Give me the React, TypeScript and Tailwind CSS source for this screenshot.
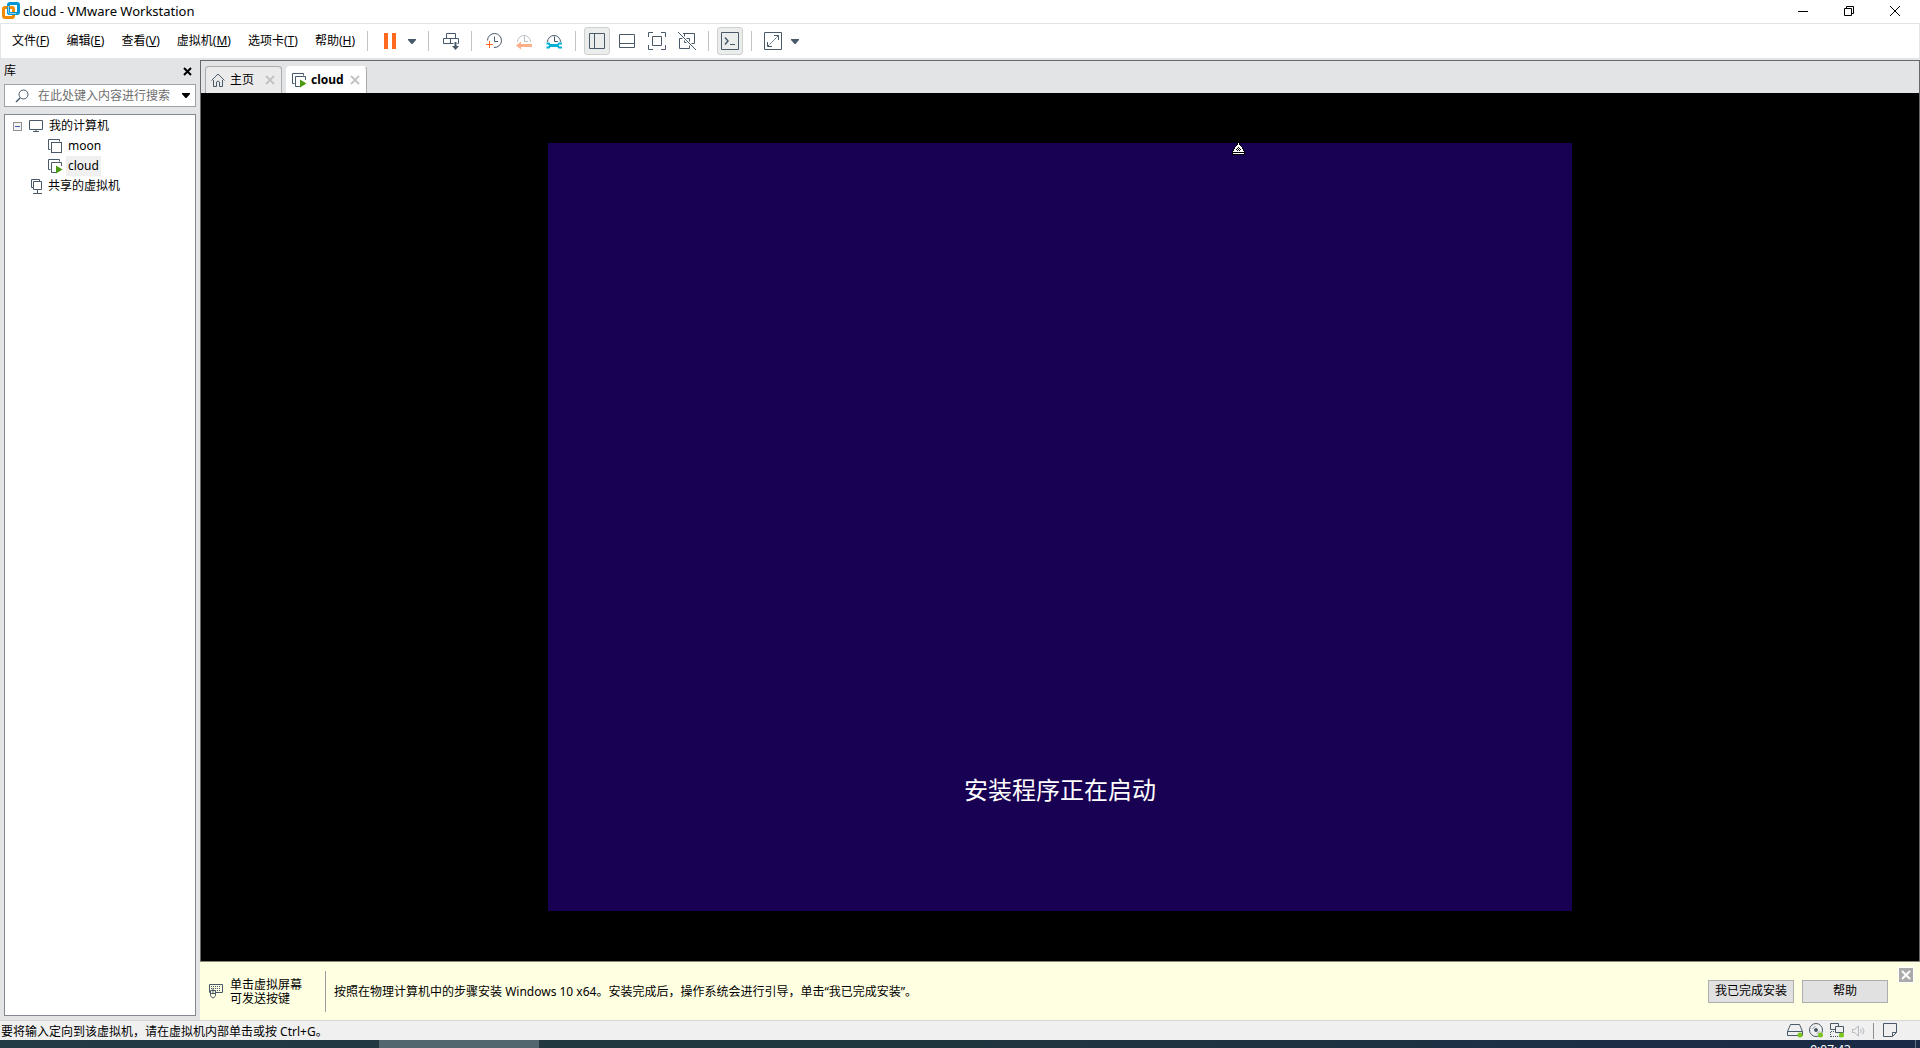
import type { ReactNode } from 'react'

const menus = [
  { label: '文件', key: 'F' },
  { label: '编辑', key: 'E' },
  { label: '查看', key: 'V' },
  { label: '虚拟机', key: 'M' },
  { label: '选项卡', key: 'T' },
  { label: '帮助', key: 'H' },
]

function Icon({ w = 18, h = 18, className = '', children }: { w?: number; h?: number; className?: string; children: ReactNode }) {
  return (
    <svg
      width={w}
      height={h}
      viewBox={`0 0 ${w} ${h}`}
      fill="none"
      stroke="#485969"
      className={`shrink-0 ${className}`}
      aria-hidden="true"
    >
      {children}
    </svg>
  )
}

function Logo() {
  return (
    <Icon w={18} h={18}>
      <rect x="6.5" y="1.5" width="10" height="10" rx="1.5" stroke="#0095d3" strokeWidth="3" />
      <rect x="1.5" y="5.5" width="10" height="10" rx="1.5" stroke="#f38b00" strokeWidth="3" />
      <path d="M6.5 5v5a1.5 1.5 0 0 0 1.5 1.5h6" stroke="#0095d3" strokeWidth="3" />
      <path d="M6.5 4v6q0 1.5 1.5 1.5h6" stroke="#8fd0ee" />
    </Icon>
  )
}

function Caret({ color = '#485969' }: { color?: string }) {
  return (
    <Icon w={8} h={5}>
      <path d="M0 0h8v1L4.5 5h-1L0 1z" fill={color} stroke="none" />
    </Icon>
  )
}

function Cross({ size = 10, color = '#000', width = 1 }: { size?: number; color?: string; width?: number }) {
  return (
    <Icon w={size} h={size}>
      <path d={`M1 1L${size - 1} ${size - 1}M${size - 1} 1L1 ${size - 1}`} stroke={color} strokeWidth={width} />
    </Icon>
  )
}

function VmIcon({ running = false }: { running?: boolean }) {
  return (
    <Icon w={15} h={15}>
      <path d="M2.5 10.5h-2v-10h11v2" />
      {running ? (
        <>
          <path d="M8 13.5H3.5v-10h10V7" />
          <path d="M8 6.5v8l6.5-4z" fill="#4c9a14" stroke="none" />
        </>
      ) : (
        <rect x="3.5" y="3.5" width="10" height="10" />
      )}
    </Icon>
  )
}

// upper half of a clock face, the lower half is covered by each tool's badge
function Clock({ color = '#485969' }: { color?: string }) {
  return (
    <g stroke={color}>
      <path d="M2.5 10a6.5 6.5 0 1 1 13 0" />
      <path d="M9.5 4.5v5H13" />
    </g>
  )
}

function Sep() {
  return <span className="h-5 w-px shrink-0 bg-[#c3c3c3]" />
}

function Tool({ label, active = false, className = '', children }: { label: string; active?: boolean; className?: string; children: ReactNode }) {
  return (
    <button
      type="button"
      aria-label={label}
      className={`flex h-7 shrink-0 items-center justify-center border ${
        active ? 'rounded-[3px] border-[#cfd1d1] bg-[#ebecec]' : 'border-transparent'
      } ${className}`}
    >
      {children}
    </button>
  )
}

function TitleBar() {
  return (
    <header className="flex h-[23px] shrink-0 items-center bg-white pb-0.5 pl-0.5 pr-0.5">
      <Logo />
      <h1 className="ml-[3px] flex-1 text-[13px] leading-5">cloud - VMware Workstation</h1>
      <button type="button" aria-label="最小化" className="flex h-5 w-[46px] items-center justify-center">
        <Icon w={10} h={10}><path d="M0 5.5h10" stroke="#000" /></Icon>
      </button>
      <button type="button" aria-label="还原" className="flex h-5 w-[46px] items-center justify-center">
        <Icon w={10} h={10}>
          <path d="M.5 2.5h7v7h-7zM2.5 2.5v-2h7v7h-2" stroke="#000" />
        </Icon>
      </button>
      <button type="button" aria-label="关闭" className="flex h-5 w-[46px] items-center justify-center">
        <Icon w={10} h={10}><path d="M0 0l10 10M10 0L0 10" stroke="#000" /></Icon>
      </button>
    </header>
  )
}

function MenuBar() {
  return (
    <div className="flex h-9 shrink-0 items-center border border-[#e3e4e6] bg-white pl-[11px]">
      <nav className="mr-3 flex gap-[17px]">
        {menus.map((m) => (
          <button key={m.key} type="button" className="whitespace-nowrap text-xs leading-4">
            {m.label}(<span className="underline">{m.key}</span>)
          </button>
        ))}
      </nav>
      <Sep />
      <Tool label="挂起" className="ml-2 w-7">
        <Icon w={12} h={16}>
          <path d="M0 0h4v16H0zM8 0h4v16H8z" fill="#ff6a1f" stroke="none" />
        </Icon>
      </Tool>
      <Tool label="电源选项" className="w-4"><Caret /></Tool>
      <span className="w-2" />
      <Sep />
      <Tool label="发送 Ctrl+Alt+Del" className="ml-2 w-7">
        <Icon w={17} h={18}>
          <path d="M3.5 1.5h9v5h-9zM.5 6.5h7v5h-7zM7.5 6.5h8v5h-8z" />
          <path d="M12.5 10.5v5" stroke="#fff" strokeWidth="4" />
          <path d="M12.5 10v6" strokeWidth="2" />
          <path d="M9 14h7l-3.5 4z" fill="#485969" stroke="none" />
        </Icon>
      </Tool>
      <span className="w-1.5" />
      <Sep />
      <Tool label="拍摄快照" className="ml-2 w-7">
        <Icon>
          <path d="M2.5 8.500a7 7 0 1 1 6.500 7" />
          <path d="M9.5 4.5v5H13" />
          <path d="M4.5 9v7M1 12.5h7" stroke="#ff6a1f" />
        </Icon>
      </Tool>
      <Tool label="恢复快照" className="ml-0.5 w-7">
        <Icon>
          <Clock color="#b6bdc3" />
          <path d="M1 13.5l5-4v2.5h11v3H6v2.5z" fill="#ffb08a" stroke="none" />
        </Icon>
      </Tool>
      <Tool label="管理快照" className="ml-0.5 w-7">
        <Icon>
          <Clock />
          <path d="M5 13.5h8" stroke="#00b2d6" strokeWidth="3" />
          <path d="M1.5 11.5h2.500l1 2-1 2H1.500M17 11.500h-3l-1.500 2 1.500 2h3" stroke="#00b2d6" strokeWidth="2" />
        </Icon>
      </Tool>
      <span className="w-[7px]" />
      <Sep />
      <Tool label="显示库" active className="ml-2 w-[26px]">
        <Icon w={16} h={16}><path d="M.5.5h15v15H.5zM5.5.5v15" /></Icon>
      </Tool>
      <Tool label="显示缩略图" className="ml-1 w-[26px]">
        <Icon w={16} h={16}><path d="M.5 1.5h15v13H.5zM.5 10.5h15" /></Icon>
      </Tool>
      <Tool label="全屏" className="ml-1 w-[26px]">
        <Icon>
          <path d="M.5 5V.5H5M13 .5h4.5V5M17.5 13v4.5H13M5 17.5H.5V13M4.5 4.5h9v9h-9z" />
        </Icon>
      </Tool>
      <Tool label="Unity 模式" className="ml-1 w-[26px]">
        <Icon>
          <path d="M5 1.5h11.5v10H13M11.5 12v4.5h-10v-10H5M6.5 1.5v9h5v-4H8" />
          <path d="M0 0l18 18" stroke="#fff" strokeWidth="3" />
          <path d="M0 0l18 18" />
        </Icon>
      </Tool>
      <span className="w-2" />
      <Sep />
      <Tool label="控制台视图" active className="ml-2 w-[26px]">
        <Icon>
          <path d="M.5.5h17v17H.5z" />
          <path d="M4 5.5L7 9l-3 3.5" strokeWidth="1.5" />
          <path d="M9 12.5h5" />
        </Icon>
      </Tool>
      <span className="w-2" />
      <Sep />
      <Tool label="自由拉伸" className="ml-[7px] w-7">
        <Icon>
          <path d="M.5.5h17v17H.5zM10 3.5h4.5V8M3.5 10v4.5H8" />
          <path d="M4 14L14 4" strokeDasharray="2 1" />
        </Icon>
      </Tool>
      <Tool label="拉伸选项" className="w-4"><Caret /></Tool>
    </div>
  )
}

function Library() {
  return (
    <aside className="flex w-[200px] shrink-0 flex-col bg-[#e3e4e6] px-1 pb-1">
      <div className="flex h-6 items-center justify-between pb-0.5 pr-1">
        <h2 className="text-xs">库</h2>
        <button type="button" aria-label="关闭库"><Cross size={9} width={2} /></button>
      </div>
      <div className="flex h-[23px] shrink-0 items-center border border-[#a0a2a5] bg-white pl-2.5 pr-[5px]">
        <Icon w={14} h={14}>
          <circle cx="8.5" cy="5.5" r="4.5" />
          <path d="M5 9L1 13" strokeWidth="1.5" />
        </Icon>
        <input
          type="text"
          aria-label="搜索"
          placeholder="在此处键入内容进行搜索"
          className="ml-[9px] min-w-0 flex-1 bg-transparent text-xs outline-none placeholder:text-[#6d6d6d]"
        />
        <button type="button" aria-label="搜索选项"><Caret color="#000" /></button>
      </div>
      <div className="mt-[7px] flex-1 border border-[#828790] bg-white pt-px text-xs">
        <ul>
          <li>
            <div className="flex h-5 items-center pl-2">
              <button type="button" aria-label="折叠" className="mr-[7px]">
                <Icon w={9} h={9}>
                  <rect x=".5" y=".5" width="8" height="8" fill="#f4f4f4" stroke="#919191" />
                  <path d="M2 4.5h5" stroke="#3b5fa8" />
                </Icon>
              </button>
              <Icon w={14} h={12}>
                <path d="M.5.5h13v9H.5zM7 9.5v2M4 11.5h6" />
              </Icon>
              <span className="ml-1.5">我的计算机</span>
            </div>
            <ul>
              <li className="flex h-5 items-center gap-[3px] pl-[43px]">
                <VmIcon />
                <span className="px-0.5 leading-5">moon</span>
              </li>
              <li className="flex h-5 items-center gap-[3px] pl-[43px]">
                <VmIcon running />
                <span className="bg-[#f0f0f0] px-0.5 leading-5">cloud</span>
              </li>
            </ul>
          </li>
          <li className="flex h-5 items-center pl-[26px]">
            <Icon w={12} h={15}>
              <path d="M2.5 8.5h-2v-8h8v2M2.5 2.5h8v8h-8zM6.5 10.5v4M2 14.5h9" />
            </Icon>
            <span className="ml-[5px]">共享的虚拟机</span>
          </li>
        </ul>
      </div>
    </aside>
  )
}

function Tabs() {
  return (
    <div className="flex h-8 shrink-0 items-end gap-1 bg-[#e3e4e6] pl-1">
      <div className="flex h-[27px] items-center rounded-t border border-b-0 border-[#a9abae] bg-[#ebebec] pl-[5px] pr-1.5">
        <a href="#home" className="flex items-center gap-[5px] text-xs">
          <Icon w={14} h={14}>
            <path d="M.5 7.5L7 1l6.5 6.5M2.5 7v6.500h3V9q1.500-2 3 0v4.500h3V7" />
          </Icon>
          主页
        </a>
        <button type="button" aria-label="关闭主页" className="ml-[11px]"><Cross color="#c4c4c4" width={2} /></button>
      </div>
      <div className="flex h-[27px] items-center rounded-t border border-b-0 border-white border-r-[#a9abae] bg-white pl-[5px] pr-1.5">
        <a href="#cloud" className="flex items-center gap-1 text-xs font-bold">
          <VmIcon running />
          cloud
        </a>
        <button type="button" aria-label="关闭 cloud" className="ml-1.5"><Cross color="#c4c4c4" width={2} /></button>
      </div>
    </div>
  )
}

function Screen() {
  return (
    <div className="flex min-h-0 flex-1 items-center justify-center bg-black">
      <div className="relative flex aspect-[4/3] max-h-full w-[1024px] max-w-full flex-col items-center justify-end bg-[#180052] pb-[103px]">
        <p className="text-2xl leading-9 text-white">安装程序正在启动</p>
        <svg width="13" height="12" viewBox="0 0 13 12" shapeRendering="crispEdges" className="absolute left-[684px] top-0" aria-hidden="true">
          <path d="M5 0h3v2h1v1h1v1h1v2h1v2h1v4H0V8h1V6h1V4h1V3h1V2h1z" fill="#000" />
          <path d="M6 0h1v2h1v1h1v1h1v2h1v2h1v1H1V8h1V6h1V4h1V3h1V2h1zM1 10h11v1H1z" fill="#fff" />
          <path d="M6 4h1v1H6zM5 5h1v1H5zM7 5h1v1H7zM4 6h1v1H4zM6 6h1v1H6zM8 6h1v1H8zM5 7h1v1H5zM7 7h1v1H7z" fill="#000" />
        </svg>
      </div>
    </div>
  )
}

function Notice() {
  return (
    <div className="relative flex h-[59px] shrink-0 items-center border-t border-[#8a8a7a] bg-[#ffffe1] pl-[9px] text-xs">
      <Icon w={15} h={15}>
        <path d="M.5.5h13v8H.5z" />
        <path d="M2 2.5h10M2 4.5h10M4 6.5h7" strokeDasharray="1 1" />
        <path d="M1.5 6.5h5v5q-2.5 5-5 0z" fill="#ffffe1" />
        <path d="M4 4v5M1.5 9.5h5" />
      </Icon>
      <p className="ml-1.5 pt-0.5 leading-[14px]">
        单击虚拟屏幕
        <br />
        可发送按键
      </p>
      <span className="ml-[23px] h-[41px] w-px bg-[#9b9ba0]" />
      <p className="ml-2 flex-1 pt-0.5">
        按照在物理计算机中的步骤安装 Windows 10 x64。安装完成后，操作系统会进行引导，单击“我已完成安装”。
      </p>
      <div className="mr-8 flex gap-2">
        <button type="button" className="h-[23px] w-[86px] border border-[#adadad] bg-[#e1e1e1]">我已完成安装</button>
        <button type="button" className="h-[23px] w-[86px] border border-[#adadad] bg-[#e1e1e1]">帮助</button>
      </div>
      <button
        type="button"
        aria-label="关闭提示"
        className="absolute right-1.5 top-[5px] flex size-4 items-center justify-center border border-white bg-[#aaaaaa]"
      >
        <Cross color="#fff" width={2} />
      </button>
    </div>
  )
}

function StatusBar() {
  return (
    <footer className="flex h-5 shrink-0 items-center border-t border-[#d7d7d7] bg-[#f0f0f0] pl-px pr-[22px]">
      <p className="flex-1 pt-0.5 text-xs leading-4">要将输入定向到该虚拟机，请在虚拟机内部单击或按 Ctrl+G。</p>
      <Icon w={17} h={15}>
        <path d="M.5 8.5l3-7h9l3 7v4H.5zM.5 8.5h15" />
        <circle cx="13" cy="12" r="2.5" fill="#7ac51b" stroke="none" />
      </Icon>
      <Icon w={15} h={15} className="ml-[5px]">
        <circle cx="7" cy="7" r="6.5" />
        <circle cx="7" cy="7" r="1.5" fill="#485969" />
        <path d="M3.5 6q.5-2 3-2.5M10.5 8q-.5 2-3 2.5" stroke="#9aa5ae" />
        <circle cx="11.5" cy="12" r="2.5" fill="#7ac51b" stroke="none" />
      </Icon>
      <Icon w={15} h={15} className="ml-1.5">
        <path d="M5 6.5H.5v-6h8v3M5.5 3.5h8v6h-8z" />
        <path d="M1 8.5h4M.5 9v5M1 13.5h10" strokeDasharray="1 1" />
        <circle cx="11.5" cy="12" r="2.5" fill="#7ac51b" stroke="none" />
      </Icon>
      <Icon w={13} h={12} className="ml-[7px]">
        <path d="M.5 4.5h2l4-3.500v10l-4-3.500h-2zM8.500 4q1.500 2 0 4M10.500 2.500q3 3.500 0 7" stroke="#b3b9be" />
      </Icon>
      <span className="ml-2 mr-[9px] h-4 w-px bg-[#8f8f8f]" />
      <Icon w={15} h={15}>
        <path d="M.5.5h13v9l-4 4h-9zM9.5 13.5v-4h4" />
      </Icon>
    </footer>
  )
}

function Taskbar() {
  return (
    <div className="flex h-2 shrink-0 overflow-hidden bg-linear-to-r from-[#233b45] via-[#20363f] to-[#1b2a47]">
      <span className="ml-[379px] h-2 w-40 bg-[#51666e]" />
      <time className="ml-auto mr-16 mt-0.5 text-xs leading-4 text-white">9:07:43</time>
      <span className="mr-1 w-px bg-[#68717f]" />
    </div>
  )
}

export default function App() {
  return (
    <div className="flex h-screen flex-col overflow-hidden bg-[#e3e4e6] font-['Noto_Sans','Noto_Sans_CJK_SC',sans-serif] text-black">
      <TitleBar />
      <MenuBar />
      <div className="flex min-h-0 flex-1 pt-px">
        <Library />
        <main className="flex min-w-0 flex-1 flex-col">
          <div className="flex min-h-0 flex-1 flex-col border-x border-t border-[#66686a]">
            <Tabs />
            <Screen />
          </div>
          <Notice />
        </main>
      </div>
      <StatusBar />
      <Taskbar />
    </div>
  )
}
